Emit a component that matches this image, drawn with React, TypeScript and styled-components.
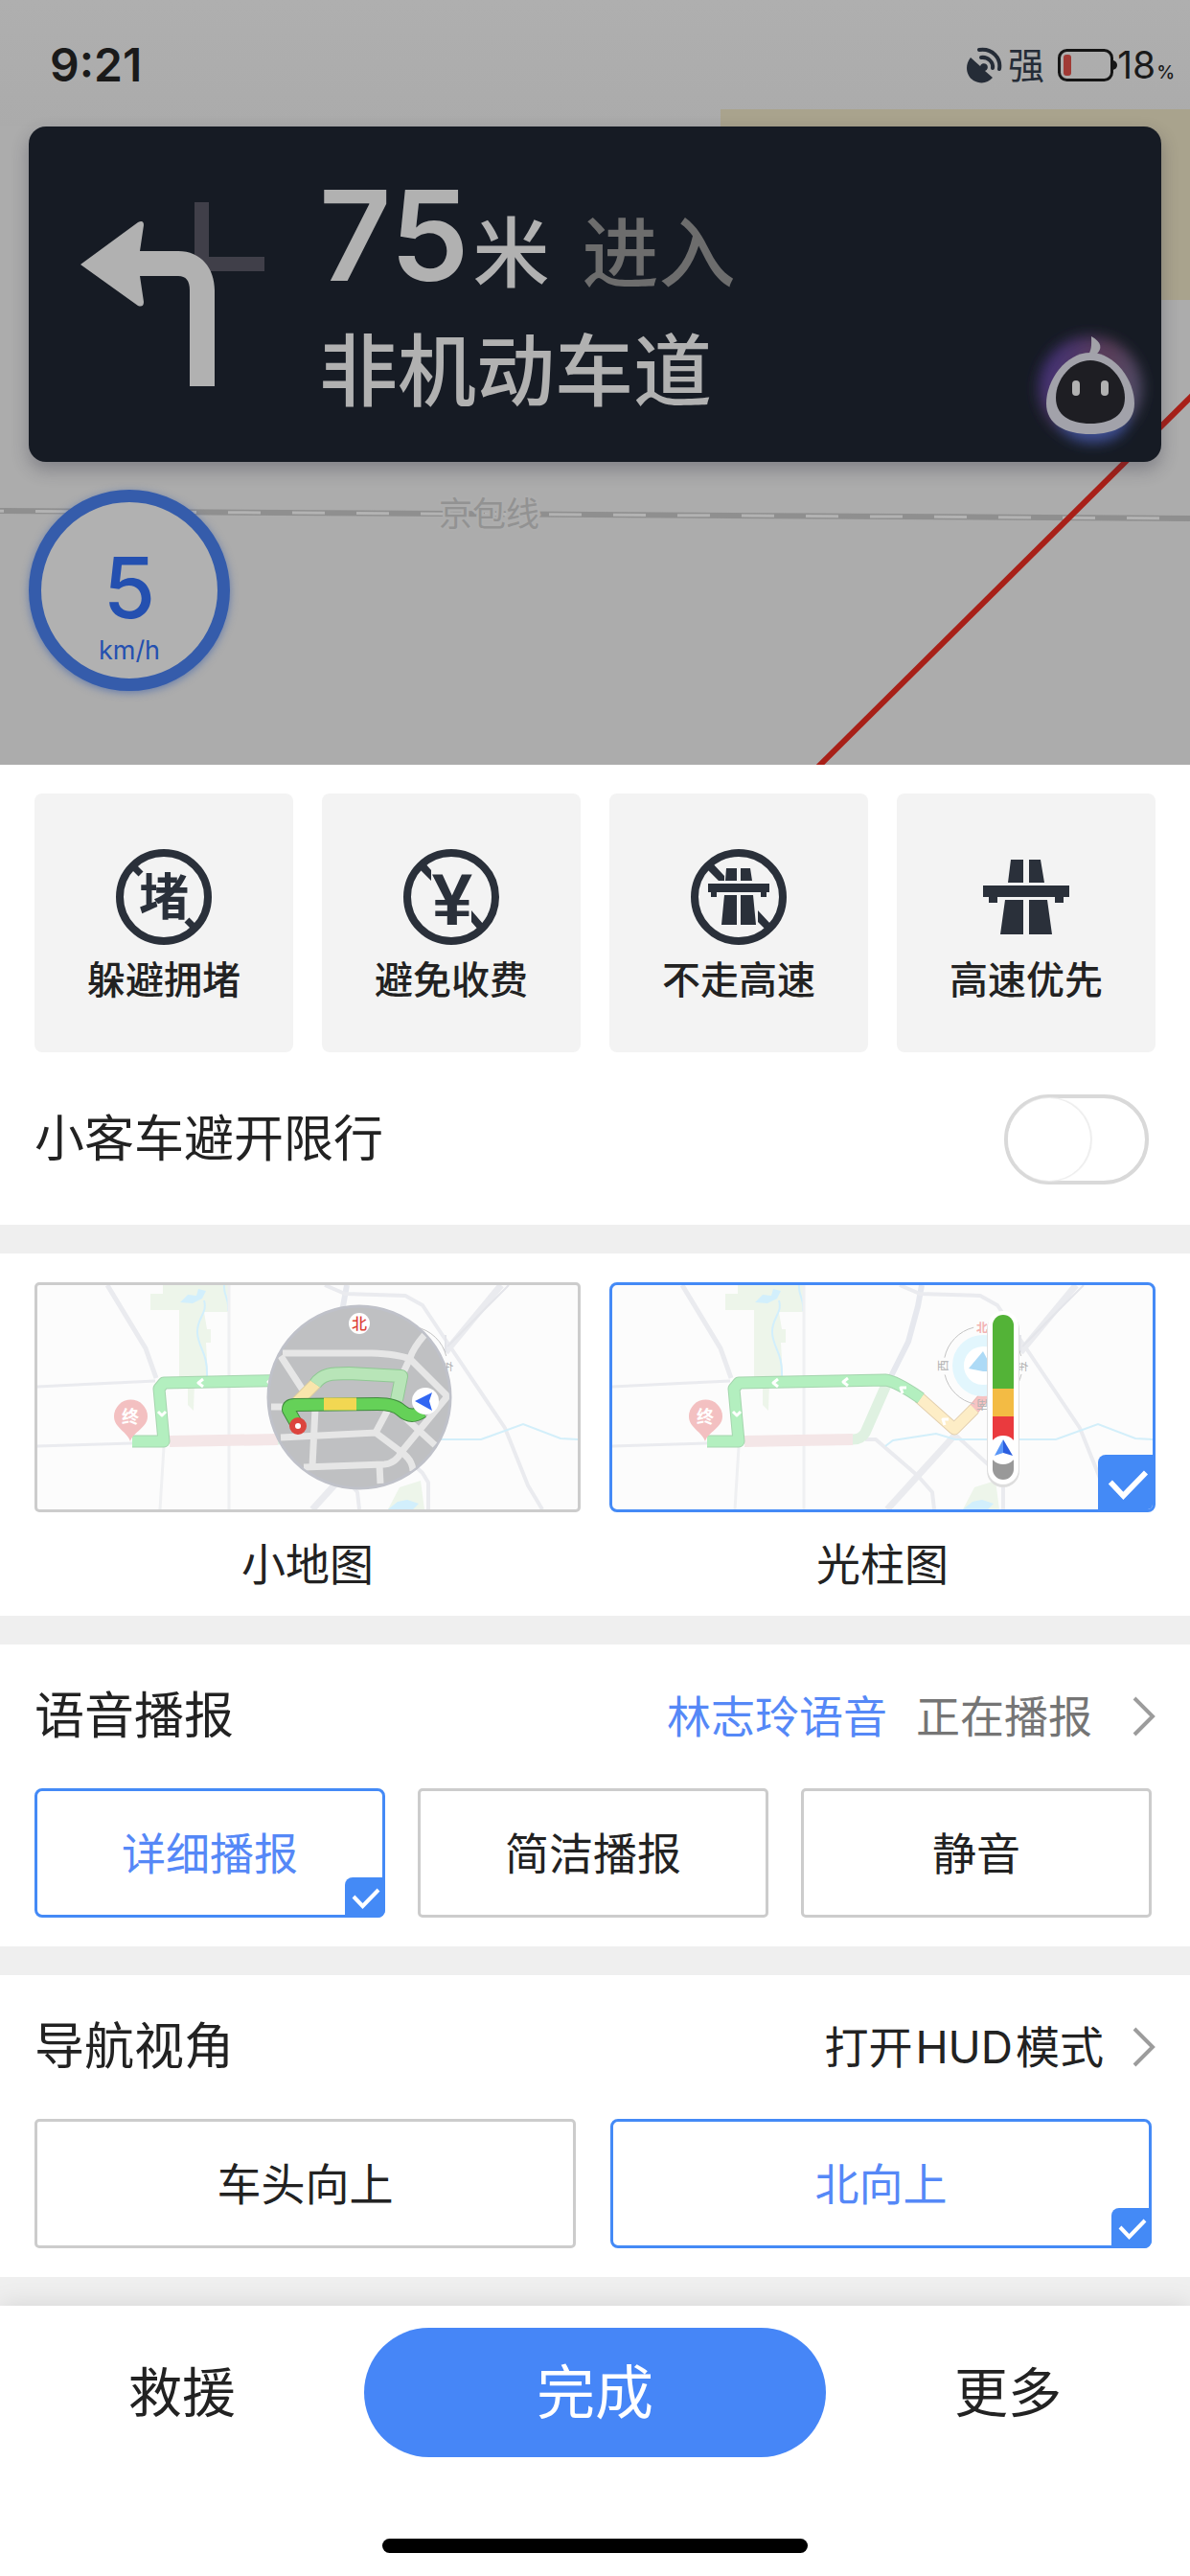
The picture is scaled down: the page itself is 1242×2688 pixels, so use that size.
import React, { useId, useState } from 'react';
import styled, { createGlobalStyle } from 'styled-components';

const BLUE = '#448af6';
const INK = '#222222';
const SLATE = '#2a303a';

const GlobalStyle = createGlobalStyle`
  *, *::before, *::after { box-sizing: border-box; }
  body {
    margin: 0;
    background: #ffffff;
    color: ${INK};
    font-family: Inter, "Noto Sans CJK SC", sans-serif;
    font-size: 46px;
    line-height: 60px;
  }
  button, input { font: inherit; color: inherit; margin: 0; }
  svg { display: block; flex: none; }
  svg text { font-family: "Noto Sans CJK SC", sans-serif; }
`;

/* ---------- navigation view ---------- */

const Stage = styled.header`
  position: relative;
  padding: 0 30px 77px;
  background: #acacac;
  overflow: hidden;
`;

const Backdrop = styled.svg`
  position: absolute;
  inset: 0;
  width: 100%;
  height: 100%;
`;

const StatusBar = styled.div`
  position: relative;
  display: flex;
  align-items: center;
  justify-content: space-between;
  height: 132px;
  margin: 0 -14px 0 0;
  padding: 4px 0 0 22px;
  color: #1a1a1a;
`;

const Clock = styled.time`
  font-size: 48px;
  font-weight: 600;
  line-height: 56px;
`;

const StatusItems = styled.div`
  display: flex;
  align-items: center;
  line-height: 48px;
`;

const Signal = styled.span`
  margin: 0 14px 0 6px;
  font-size: 38px;
  color: #252c37;
`;

const Charge = styled.span`
  display: flex;
  align-items: baseline;
  gap: 1px;
  font-size: 39px;
`;

const Percent = styled.small`
  font-size: 19px;
  font-weight: 500;
  line-height: 20px;
`;

const TurnCard = styled.section`
  position: relative;
  display: flex;
  gap: 57px;
  height: 350px;
  padding: 44px 24px 0 54px;
  border-radius: 18px;
  background: #161b24;
  box-shadow: 0 8px 18px rgba(40, 40, 60, 0.32);
  color: #b1b1b1;
`;

const TurnIcon = styled.svg`
  margin-top: 35px;
`;

const TurnText = styled.div`
  flex: 1;
`;

const DistanceLine = styled.p`
  display: flex;
  align-items: baseline;
  margin: 0;
  line-height: 140px;
  font-size: 80px;
  font-weight: 500;
`;

const Distance = styled.strong`
  margin-right: 4px;
  font-size: 131px;
  font-weight: 600;
`;

const Enter = styled.span`
  margin-left: 34px;
  color: #6d6d6d;
`;

const RoadName = styled.p`
  margin: 0;
  font-size: 82px;
  font-weight: 500;
  line-height: 108px;
`;

const Assistant = styled.button`
  position: absolute;
  right: 0;
  bottom: 0;
  padding: 0;
  border: 0;
  background: none;
`;

const SpeedDial = styled.div`
  position: relative;
  display: flex;
  flex-direction: column;
  align-items: center;
  width: 210px;
  height: 210px;
  margin-top: 29px;
  padding-top: 36px;
  border: 13px solid #355cab;
  border-radius: 50%;
  background: #b1b1b1;
  box-shadow: 0 2px 8px rgba(53, 92, 171, 0.6);
  color: #2450b0;
`;

const Speed = styled.span`
  font-size: 88px;
  font-weight: 500;
  line-height: 106px;
`;

const SpeedUnit = styled.span`
  font-size: 27px;
  line-height: 26px;
`;

/* ---------- settings sheet ---------- */

const Section = styled.section`
  border-bottom: 30px solid #efefef;
  background: #ffffff;
`;

const PreferenceGrid = styled.div`
  display: grid;
  grid-template-columns: repeat(4, 1fr);
  gap: 30px;
  padding: 30px 36px 0;
`;

const PreferenceCard = styled.button`
  display: flex;
  flex-direction: column;
  align-items: center;
  gap: 13px;
  aspect-ratio: 1;
  padding: 58px 0 0;
  border: 0;
  border-radius: 8px;
  background: #f3f3f3;
  font-size: 40px;
  font-weight: 500;
  line-height: 48px;
`;

const SwitchRow = styled.label`
  display: flex;
  align-items: center;
  justify-content: space-between;
  height: 180px;
  padding: 2px 43px 0 36px;
  font-size: 52px;
`;

const Switch = styled.input`
  appearance: none;
  display: flex;
  width: 151px;
  height: 94px;
  border: 4px solid #d9d9d9;
  border-radius: 47px;
  background: #ffffff;

  &::before {
    content: '';
    width: 86px;
    height: 86px;
    border-radius: 50%;
    background: #ffffff;
    box-shadow: 1px 0 1px 1px #eeeeee;
  }
  &:checked {
    justify-content: flex-end;
    background: ${BLUE};
  }
`;

const OverviewGrid = styled.div`
  display: grid;
  grid-template-columns: repeat(2, 1fr);
  gap: 30px;
  padding: 30px 36px 0;
`;

const OverviewChoice = styled.label`
  display: flex;
  flex-direction: column;
  text-align: center;
  line-height: 108px;
`;

const HiddenRadio = styled.input`
  position: absolute;
  width: 1px;
  height: 1px;
  opacity: 0;
`;

const Thumb = styled.div<{ $on: boolean }>`
  position: relative;
  height: 240px;
  border: 3px solid ${p => (p.$on ? BLUE : '#cccccc')};
  border-radius: ${p => (p.$on ? 8 : 5)}px;
  background: #fcfcfc;
  overflow: hidden;
`;

const MapArt = styled.svg`
  width: 100%;
  height: 100%;
`;

const SectionHead = styled.div`
  display: flex;
  align-items: center;
  justify-content: space-between;
  height: 150px;
  padding: 0 36px;
`;

const Heading = styled.h2`
  margin: 0;
  font-size: 52px;
  font-weight: 400;
`;

const MoreLink = styled.a<{ $gap: number }>`
  display: flex;
  align-items: center;
  gap: ${p => p.$gap}px;
  color: inherit;
  text-decoration: none;
`;

const Latin = styled.span`
  margin: 0 3px;
`;

const VoiceState = styled.span`
  display: flex;
  gap: 30px;
  color: #757575;
`;

const VoiceName = styled.span`
  color: #5588f7;
`;

const Options = styled.div<{ $gap: number }>`
  display: flex;
  gap: ${p => p.$gap}px;
  padding: 0 40px 30px 36px;
`;

const Option = styled.label<{ $on: boolean }>`
  position: relative;
  flex: 1;
  display: flex;
  align-items: center;
  justify-content: center;
  height: 135px;
  border: 3px solid ${p => (p.$on ? BLUE : '#cccccc')};
  border-radius: ${p => (p.$on ? 8 : 5)}px;
  color: ${p => (p.$on ? '#5588f7' : INK)};
`;

const Badge = styled.span<{ $size: number }>`
  position: absolute;
  right: -3px;
  bottom: -3px;
  display: grid;
  place-items: center;
  width: ${p => p.$size}px;
  height: ${p => p.$size}px;
  border-radius: 8px 0;
  background: ${BLUE};
`;

const Footer = styled.footer`
  position: relative;
  padding: 23px 0 24px;
  background: #ffffff;
  box-shadow: 0 -2px 24px rgba(0, 0, 0, 0.1);
`;

const Actions = styled.div`
  display: grid;
  grid-template-columns: 1fr 482px 1fr;
  height: 135px;
`;

const TextAction = styled.button`
  padding: 0;
  border: 0;
  background: none;
  font-size: 56px;
`;

const DoneButton = styled.button`
  padding: 0;
  border: 0;
  border-radius: 68px;
  background: #4686f7;
  color: #ffffff;
  font-size: 61px;
`;

const HomeIndicator = styled.div`
  width: 444px;
  height: 15px;
  margin: 85px auto 0;
  border-radius: 8px;
  background: #000000;
`;

/* ---------- drawings ---------- */

const StageMap = () => (
  <Backdrop viewBox="0 0 1242 798" preserveAspectRatio="xMidYMin slice" aria-hidden="true">
    <defs>
      <linearGradient id="sky" x1="0" y1="0" x2="0" y2="1">
        <stop offset="0" stopColor="#afafaf" />
        <stop offset="1" stopColor="#ababab" />
      </linearGradient>
    </defs>
    <rect width="1242" height="798" fill="#acacac" />
    <rect width="1242" height="132" fill="url(#sky)" />
    <rect x="752" y="114" width="490" height="199" fill="#a9a38d" />
    <path d="M0 533 L1242 541" stroke="#8f8f8f" strokeWidth="6" />
    <path d="M-30 533 L1242 541" stroke="#b3b3b3" strokeWidth="3" strokeDasharray="34 33" />
    <path d="M850 804 L1250 407" stroke="#a82018" strokeWidth="6" />
    <text x="458" y="549" fontSize="35" fill="#929292" stroke="#adadad" strokeWidth="5" paintOrder="stroke">
      京包线
    </text>
  </Backdrop>
);

const SatelliteIcon = () => (
  <svg width="38" height="38" viewBox="0 0 38 38" fill="none" aria-hidden="true">
    <path d="M5 11 C-2 20 1 31 8 35 C15 39 23 38 28 32 L20 25 A4 4 0 1 0 15 20 Z" fill="#252c37" />
    <path d="M14 3 C28 1 37 12 35 23" stroke="#252c37" strokeWidth="4" strokeLinecap="round" />
    <path d="M16 11 C23 10 29 16 28 22" stroke="#252c37" strokeWidth="4" strokeLinecap="round" />
  </svg>
);

const BatteryIcon = () => (
  <svg width="62" height="34" viewBox="0 0 62 34" fill="none" aria-hidden="true">
    <rect x="1.500" y="1.500" width="55" height="31" rx="8" stroke="#151515" strokeWidth="3" />
    <rect x="6" y="6" width="8" height="22" rx="3" fill="#a03a35" />
    <path d="M57 12 a5 5 0 0 1 0 10 Z" fill="#151515" />
  </svg>
);

const TurnLeft = () => (
  <TurnIcon width="192" height="193" viewBox="84 211 192 193" aria-label="左转">
    <path d="M203 211 H218 V268 H276 V283 H203 Z" fill="#403f49" />
    <path
      d="M84 276 L144 232 Q150 229 150 235 L146 262 H186 C210 262 224 280 224 303 V403 H198 V303 C198 293 194 288 186 288 H146 L150 315 Q150 321 144 319 Z"
      fill="#b1b1b1"
    />
  </TurnIcon>
);

const AssistantFace = () => (
  <svg width="150" height="150" viewBox="1061 332 150 150" aria-hidden="true">
    <defs>
      <filter id="soft" x="-30%" y="-30%" width="160%" height="160%">
        <feGaussianBlur stdDeviation="7" />
      </filter>
      <linearGradient id="aura" x1="0" y1="0.300" x2="1" y2="0.700">
        <stop offset="0" stopColor="#40307a" />
        <stop offset="0.500" stopColor="#5a3c58" />
        <stop offset="1" stopColor="#50506c" />
      </linearGradient>
    </defs>
    <g filter="url(#soft)">
      <circle cx="1137" cy="405" r="54" fill="url(#aura)" />
      <ellipse cx="1140" cy="438" rx="36" ry="24" fill="#3f4f94" />
    </g>
    <path d="M1138 351 C1149 357 1150 364 1143 370 L1135 370 C1139 364 1138 357 1138 351 Z" fill="#a2a2a8" />
    <path d="M1137 368 C1163 368 1183 397 1183 421 C1183 443 1163 453 1137 453 C1111 453 1091 443 1091 421 C1091 397 1111 368 1137 368 Z" fill="#a2a2aa" />
    <path d="M1137 376 C1157 376 1173 396 1173 415 C1173 433 1159 442 1137 442 C1115 442 1101 433 1101 415 C1101 396 1117 376 1137 376 Z" fill="#1e1e23" />
    <rect x="1118" y="397" width="8" height="16" rx="4" fill="#b1b1b1" />
    <rect x="1148" y="397" width="8" height="16" rx="4" fill="#b1b1b1" />
  </svg>
);

const Ring = ({ children }: { children: React.ReactNode }) => (
  <svg width="100" height="100" viewBox="0 0 100 100" fill={SLATE} aria-hidden="true">
    <circle cx="50" cy="50" r="46" fill="none" stroke={SLATE} strokeWidth="8" />
    {children}
  </svg>
);

const CongestionIcon = () => (
  <Ring>
    <path d="M16 16 L26 26 M74 74 L84 84" stroke={SLATE} strokeWidth="7" />
    <text x="50" y="69" fontSize="52" fontWeight="700" textAnchor="middle">堵</text>
  </Ring>
);

const YenSign = styled.text`
  && {
    font-family: "Liberation Sans", Arial, sans-serif;
    font-size: 76px;
    font-weight: 700;
  }
`;

const TollIcon = () => (
  <Ring>
    <path d="M16 20 L22 14 L29 22 V33 Z M71 64 L84 79 L78 84 L71 76 Z" />
    <YenSign x="51" y="79" textAnchor="middle">¥</YenSign>
  </Ring>
);

const NoHighwayIcon = () => (
  <Ring>
    <path d="M16 20 L22 14 L35 28 V33 H29 Z M70 64 L84 79 L78 84 L70 76 Z" />
    <path d="M37 20 H48 V33 H36 Z M52 20 H62 L64 33 H52 Z M18 36 H82 V45 H79 V50 H73 V45 H27 V50 H21 V45 H18 Z M35 48 H48 V79 H32 Z M52 48 H65 L68 79 H52 Z" />
  </Ring>
);

const HighwayIcon = () => (
  <svg width="100" height="100" viewBox="0 0 100 100" fill={SLATE} aria-hidden="true">
    <path d="M34 11 H47 V35 H31 Z M53 11 H65 L69 35 H53 Z M5 38 H95 V50 H89 V56 H80 V50 H20 V56 H11 V50 H5 Z M28 53 H47 V89 H23 Z M53 53 H72 L77 89 H53 Z" />
  </svg>
);

const CheckMark = ({ size }: { size: number }) => (
  <svg width={size} height={size} viewBox="0 0 42 42" fill="none" aria-hidden="true">
    <path d="M9 20 L18.500 30 L35 13" stroke="#ffffff" strokeWidth="4" />
  </svg>
);

const Chevron = () => (
  <svg width="26" height="42" viewBox="0 0 26 42" fill="none" aria-hidden="true">
    <path d="M4 2 L23 21 L4 40" stroke="#9c9c9c" strokeWidth="4" />
  </svg>
);

const BaseMap = () => (
  <>
    <path d="M131 0 H199 V28 H174 L177 46 H181 V60 H176 L178 96 L164 102 L163 131 L157 125 V100 H148 V26 H118 V9 H131 Z" fill="#edf5ea" />
    <path d="M378 211 L400 204 L404 234 H366 Z" fill="#edf5ea" />
    <path d="M149 18 L157 10 L166 11 L168 4 L176 6 L172 14 L162 19 Z M366 234 L376 226 L386 224 L398 228 L392 234 Z" fill="#d2effc" />
    <path d="M174 16 C178 30 166 34 167 50 C168 66 178 70 177 96 M195 0 C194 12 201 14 199 27" fill="none" stroke="#d2effc" strokeWidth="2" />
    <g fill="none" stroke="#eaebef" strokeWidth="5" strokeLinejoin="round">
      <path d="M73 0 L113 66 L124 97" />
      <path d="M0 106 L60 103 L123 100 M0 168 L99 165" strokeWidth="3" />
      <path d="M200 0 V234 M132 169 L128 234" stroke="#eff0f2" strokeWidth="3" />
      <path d="M323 0 L319 22 L309 59 L289 99" stroke="#e6e8ee" strokeWidth="6" />
      <path d="M300 0 L321 9 L384 11 L402 21 L424 54 L432 66 L488 149 L512 209 L527 234" strokeWidth="4" />
      <path d="M484 0 L426 70" strokeWidth="7" />
      <path d="M492 0 L428 64 M426 52 V70" strokeWidth="2" stroke="#e4e5ea" />
      <path d="M358 156 L287 234" strokeWidth="7" />
      <path d="M358 156 L402 196 L408 206 V234 M264 161 H275 L319 199 L334 216 L336 234" strokeWidth="4" />
    </g>
    <path d="M285 168 L293 162 L338 155 L358 161 H463 L507 145 L546 160 L564 161" fill="none" stroke="#d3effa" strokeWidth="2" />
    <g fill="none" strokeLinejoin="round">
      <path d="M138 163 L251 161" stroke="#f4e6e7" strokeWidth="12" />
      <path d="M251 161 Q260 161 264 154 L286 104" stroke="#dff1e1" strokeWidth="11" />
      <path d="M392 112 L376 131" stroke="#e8b7b5" strokeWidth="12" />
      <path d="M392 112 L376 131" stroke="#f6c3c3" strokeWidth="10" />
      <path d="M378 129 L357 150 L320 117" stroke="#e2cfaf" strokeWidth="13" />
      <path d="M378 129 L357 150 L320 117" stroke="#fdedc6" strokeWidth="11" />
      <path d="M99 163 H132 L127 108 L132 102 L285 99 Q296 100 322 118" stroke="#a5d5ae" strokeWidth="13" />
      <path d="M99 163 H132 L127 108 L132 102 L285 99 Q296 100 322 118" stroke="#b3efbf" strokeWidth="11" />
      <path d="M173 98 L168 102 L173 106 M246 97 L241 101 L246 105 M307 107 L301 107 L303 113 M126 132 L130 136 L134 132 M351 140 L345 140 L347 146" stroke="#ffffff" strokeWidth="3" />
    </g>
    <path d="M97 163 C94 153 80 149 80 137 A17 17 0 0 1 115 137 C115 149 100 153 97 163 Z" fill="#f3c0c1" />
    <text x="97" y="144" fontSize="18" fontWeight="700" fill="#ffffff" textAnchor="middle">终</text>
    <circle cx="387" cy="84" r="26" fill="#ffffff" stroke="#e2f6fd" strokeWidth="12" />
    <circle cx="387" cy="84" r="41" fill="none" stroke="#c3c3c3" strokeWidth="1" strokeDasharray="46 18" strokeDashoffset="-9" />
    <path d="M387 69 L372 87 L387 90 L398 90 Z" fill="#addaf6" />
    <g fontSize="12" textAnchor="middle" fill="#b2b2b2">
      <text x="386" y="49" fill="#f2b3b3" fontWeight="700">北</text>
      <text transform="translate(350 84) rotate(-90)">西</text>
      <text transform="translate(386 120) rotate(180)">南</text>
      <text transform="translate(423 85) rotate(90)">东</text>
    </g>
  </>
);

const MiniMapArt = () => {
  const clip = useId();
  return (
    <MapArt viewBox="0 0 564 234" preserveAspectRatio="xMidYMid slice" aria-hidden="true">
      <BaseMap />
      <clipPath id={clip}>
        <circle cx="336" cy="117" r="94" />
      </clipPath>
      <circle cx="336" cy="117" r="95" fill="#bfc0c2" stroke="#bfc1c9" strokeWidth="3" />
      <g clipPath={`url(#${clip})`} fill="none" stroke="#e6e6e6" strokeWidth="7">
        <path d="M256 71 H349 Q376 72 389 77 L428 116 L380 174 Q374 186 362 187 L278 190" />
        <path d="M254 74 L278 111 M404 52 Q392 66 389 76 L377 102" />
        <path d="M254 159 L353 154 L377 172 Q392 182 392 194 M290 129 L287 189" />
        <path d="M353 154 L369 124 M378 133 L415 167 M357 188 L358 207 M244 127 H256" />
      </g>
      <g fill="none" strokeLinejoin="round">
        <path d="M271 122 L292 101" stroke="#dccb9c" strokeWidth="13" />
        <path d="M271 122 L292 101" stroke="#f8e5ac" strokeWidth="11" />
        <path d="M290 103 C297 93 306 92 325 92 L380 95 L375 120" stroke="#8fc893" strokeWidth="14" />
        <path d="M290 103 C297 93 306 92 325 92 L380 95 L375 120" stroke="#b8e5b8" strokeWidth="12" />
        <path d="M271 146 L262 130 Q262 125 268 125 L355 124 Q373 124 380 131 Q390 140 402 132" stroke="#3f8a3c" strokeWidth="14" />
        <path d="M271 146 L262 130 Q262 125 268 125 L355 124 Q373 124 380 131 Q390 140 402 132" stroke="#65d158" strokeWidth="12" />
        <path d="M299 124 H333" stroke="#f2d752" strokeWidth="13" />
      </g>
      <circle cx="272" cy="147" r="6" fill="#ffffff" stroke="#dc453e" strokeWidth="6" />
      <circle cx="336" cy="40" r="11" fill="#ffffff" />
      <text x="336" y="46" fontSize="16" fontWeight="500" fill="#dd4236" textAnchor="middle">北</text>
      <circle cx="405" cy="121" r="14" fill="#ffffff" />
      <path d="M394 121 L412 112 L409 121 L412 131 Z" fill="#3267f2" />
    </MapArt>
  );
};

const LightBarArt = () => (
  <MapArt viewBox="0 0 564 234" preserveAspectRatio="xMidYMid slice" aria-hidden="true">
    <BaseMap />
    <rect x="391" y="29" width="34" height="182" rx="17" fill="#dedede" />
    <rect x="392" y="27" width="32" height="181" rx="16" fill="#ffffff" />
    <path d="M397 108 V42 a11 11 0 0 1 22 0 V108 Z" fill="#53b337" />
    <rect x="397" y="108" width="22" height="29" fill="#f3bb44" />
    <rect x="397" y="137" width="22" height="30" fill="#ea3a3e" />
    <path d="M397 172 V192 a11 11 0 0 0 22 0 V172 Z" fill="#999999" />
    <circle cx="408" cy="172" r="15" fill="#ffffff" />
    <path d="M408 161 L399 178 L408 175 Z" fill="#5b97f8" />
    <path d="M408 161 L418 178 L408 175 Z" fill="#2c5fe0" />
  </MapArt>
);

/* ---------- page ---------- */

const preferences = [
  { label: '躲避拥堵', Icon: CongestionIcon },
  { label: '避免收费', Icon: TollIcon },
  { label: '不走高速', Icon: NoHighwayIcon },
  { label: '高速优先', Icon: HighwayIcon },
];

const overviews = [
  { label: '小地图', Art: MiniMapArt },
  { label: '光柱图', Art: LightBarArt },
];

type ChoiceProps = {
  name: string;
  items: string[];
  gap: number;
  initial: string;
};

const ChoiceGroup = ({ name, items, gap, initial }: ChoiceProps) => {
  const [value, setValue] = useState(initial);
  return (
    <Options $gap={gap} role="radiogroup" aria-label={name}>
      {items.map(item => (
        <Option key={item} $on={item === value}>
          <HiddenRadio type="radio" name={name} checked={item === value} onChange={() => setValue(item)} />
          {item}
          {item === value && (
            <Badge $size={42}>
              <CheckMark size={42} />
            </Badge>
          )}
        </Option>
      ))}
    </Options>
  );
};

export default function App() {
  const [overview, setOverview] = useState('光柱图');
  const [active, setActive] = useState<string | null>(null);

  return (
    <>
      <GlobalStyle />
      <Stage>
        <StageMap />
        <StatusBar>
          <Clock>9:21</Clock>
          <StatusItems>
            <SatelliteIcon />
            <Signal>强</Signal>
            <BatteryIcon />
            <Charge>
              18<Percent>%</Percent>
            </Charge>
          </StatusItems>
        </StatusBar>
        <TurnCard>
          <TurnLeft />
          <TurnText>
            <DistanceLine>
              <Distance>75</Distance>
              <span>米</span>
              <Enter>进入</Enter>
            </DistanceLine>
            <RoadName>非机动车道</RoadName>
          </TurnText>
          <Assistant type="button" aria-label="语音助手">
            <AssistantFace />
          </Assistant>
        </TurnCard>
        <SpeedDial>
          <Speed>5</Speed>
          <SpeedUnit>km/h</SpeedUnit>
        </SpeedDial>
      </Stage>

      <main>
        <Section>
          <PreferenceGrid>
            {preferences.map(({ label, Icon }) => (
              <PreferenceCard
                key={label}
                type="button"
                aria-pressed={active === label}
                onClick={() => setActive(active === label ? null : label)}
              >
                <Icon />
                {label}
              </PreferenceCard>
            ))}
          </PreferenceGrid>
          <SwitchRow>
            小客车避开限行
            <Switch type="checkbox" role="switch" />
          </SwitchRow>
        </Section>

        <Section>
          <OverviewGrid>
            {overviews.map(({ label, Art }) => (
              <OverviewChoice key={label}>
                <HiddenRadio
                  type="radio"
                  name="overview"
                  checked={overview === label}
                  onChange={() => setOverview(label)}
                />
                <Thumb $on={overview === label}>
                  <Art />
                  {overview === label && (
                    <Badge $size={60}>
                      <CheckMark size={60} />
                    </Badge>
                  )}
                </Thumb>
                {label}
              </OverviewChoice>
            ))}
          </OverviewGrid>
        </Section>

        <Section>
          <SectionHead>
            <Heading>语音播报</Heading>
            <MoreLink href="#voice" $gap={40}>
              <VoiceState>
                <VoiceName>林志玲语音</VoiceName>
                正在播报
              </VoiceState>
              <Chevron />
            </MoreLink>
          </SectionHead>
          <ChoiceGroup name="语音播报" items={['详细播报', '简洁播报', '静音']} gap={34} initial="详细播报" />
        </Section>

        <Section>
          <SectionHead>
            <Heading>导航视角</Heading>
            <MoreLink href="#hud" $gap={28}>
              <span>
                打开<Latin>HUD</Latin>模式
              </span>
              <Chevron />
            </MoreLink>
          </SectionHead>
          <ChoiceGroup name="导航视角" items={['车头向上', '北向上']} gap={36} initial="北向上" />
        </Section>
      </main>

      <Footer>
        <Actions>
          <TextAction type="button">救援</TextAction>
          <DoneButton type="button">完成</DoneButton>
          <TextAction type="button">更多</TextAction>
        </Actions>
        <HomeIndicator />
      </Footer>
    </>
  );
}
